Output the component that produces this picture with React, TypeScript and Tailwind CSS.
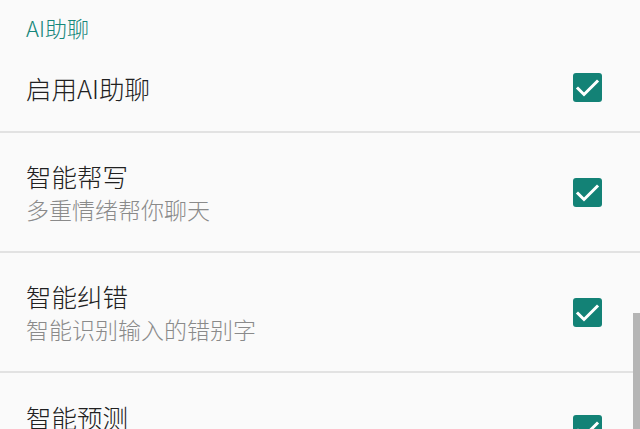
import React from "react";

const font = { fontFamily: '"Noto Sans CJK SC", "Noto Sans", sans-serif' };

function Check() {
  return (
    <div className="w-[29px] h-[29px] rounded-[3px] bg-[#138276] flex items-center justify-center shrink-0">
      <svg width="29" height="29" viewBox="0 0 29 29">
        <path d="M5 15.5 L11 21.5 L24 8.5" fill="none" stroke="#ffffff" strokeWidth="3" strokeLinecap="square" />
      </svg>
    </div>
  );
}

function Row({ title, sub, h }: { title: string; sub?: string; h: string }) {
  return (
    <div className={`flex items-center justify-between pl-[26px] pr-[38px] ${h}`}>
      <div className="flex flex-col">
        <div className="text-[25.5px] leading-[33px] font-light text-[#212121]">{title}</div>
        {sub && <div className="text-[23px] leading-[34px] font-light text-[#8a8a8a]">{sub}</div>}
      </div>
      <Check />
    </div>
  );
}

function Divider() {
  return <div className="h-[2px] bg-[#e2e2e2]" />;
}

export default function App() {
  return (
    <div className="relative w-[640px] h-[429px] overflow-hidden bg-[#fafafa]" style={font}>
      <div className="h-[48px] pt-[6px] pl-[26px] flex items-center text-[22px] font-light text-[#16877b]">AI助聊</div>
      <Row title="启用AI助聊" h="h-[83px] pb-[4px]" />
      <Divider />
      <Row title="智能帮写" sub="多重情绪帮你聊天" h="h-[118px]" />
      <Divider />
      <Row title="智能纠错" sub="智能识别输入的错别字" h="h-[118px]" />
      <Divider />
      <div className="flex justify-between pl-[26px] pr-[38px] pt-[27px]">
        <div className="text-[25.5px] leading-[33px] font-light text-[#212121]">智能预测</div>
        <div className="mt-[15px]">
          <Check />
        </div>
      </div>
      <div className="absolute right-0 top-[313px] w-[7px] h-[200px] bg-[#b5b5b5]" />
    </div>
  );
}
